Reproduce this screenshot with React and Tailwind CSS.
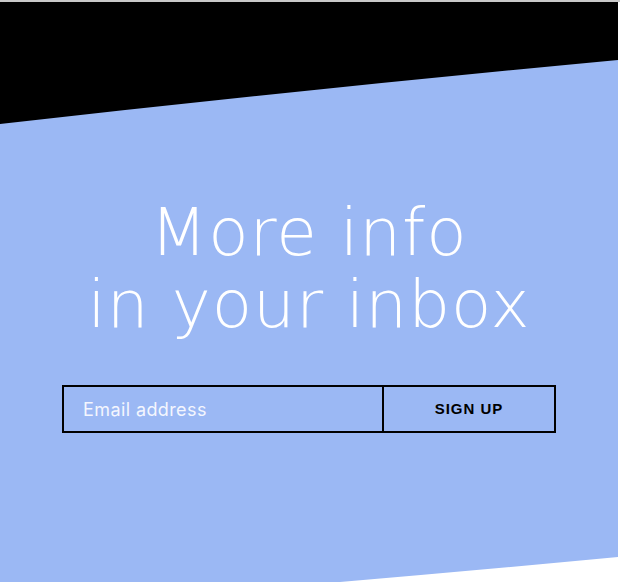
export default function App() {
  return (
    <div className="relative h-[582px] w-[620px] overflow-hidden bg-white font-['Inter',sans-serif]">
      <div className="h-[2px] bg-[#c9c9c9]" />
      <section className="relative h-[580px] w-[618px]">
        <svg className="absolute inset-0" width="618" height="580" viewBox="0 2 618 580" preserveAspectRatio="none">
          <rect x="0" y="2" width="618" height="140" fill="#000" />
          <path d="M0 124 Q300 90 618 60 L618 557 Q480 570 340 582 L0 620 Z" fill="#9bb8f4" />
        </svg>
        <div className="relative flex flex-col items-center pt-[195px]">
          <h2 className="text-center font-['DejaVu_Sans',sans-serif] text-[66px] font-extralight leading-[72px] tracking-[1px] text-white">
            More info
            <br />
            in your inbox
          </h2>
          <form className="mt-[44px] flex h-[48px] w-[494px] border-2 border-black" onSubmit={(event) => event.preventDefault()}>
            <input
              type="email"
              placeholder="Email address"
              className="min-w-0 flex-1 bg-transparent px-[19px] text-[18px] tracking-[0.4px] text-white outline-none placeholder:text-[#f4f6fe]"
            />
            <button type="submit" className="w-[172px] border-l-2 border-black font-['Liberation_Sans',sans-serif] text-[15px] font-bold tracking-[1px] text-black">
              SIGN UP
            </button>
          </form>
        </div>
      </section>
    </div>
  );
}
